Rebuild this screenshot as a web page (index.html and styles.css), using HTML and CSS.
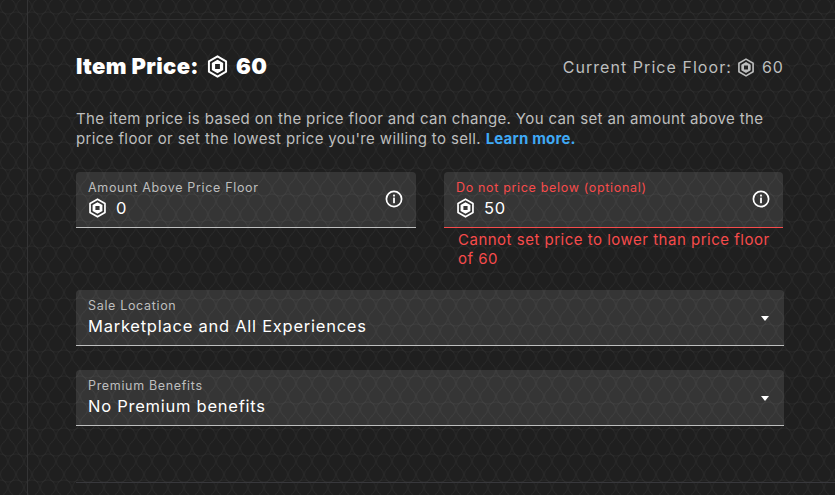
FILE: index.html
```html
<!DOCTYPE html>
<html lang="en">
<head>
<meta charset="utf-8">
<title>Item Price</title>
<link rel="stylesheet" href="styles.css">
</head>
<body>
<svg class="defs" width="0" height="0" aria-hidden="true">
  <symbol id="robux" viewBox="0 0 20 22">
    <path d="M10 1.3 18.2 6V16L10 20.7 1.8 16V6Z" fill="none" stroke="currentColor" stroke-width="1.9" stroke-linejoin="round"/>
    <path fill-rule="evenodd" d="M10 4.6 15.4 7.7V14.3L10 17.4 4.6 14.3V7.7ZM7.7 8.7V13.3H12.3V8.7Z" fill="currentColor"/>
  </symbol>
  <symbol id="info" viewBox="0 0 18 18">
    <circle cx="9" cy="9" r="7.6" fill="none" stroke="currentColor" stroke-width="1.7"/>
    <rect x="8.1" y="7.6" width="1.8" height="5.6" fill="currentColor"/>
    <rect x="8.1" y="4.6" width="1.8" height="1.9" fill="currentColor"/>
  </symbol>
</svg>
<main class="page">
  <section class="panel">
    <header class="head">
      <h2 class="title">Item Price:<svg class="rb-title"><use href="#robux"/></svg>60</h2>
      <p class="floor">Current Price Floor:<svg class="rb-floor"><use href="#robux"/></svg>60</p>
    </header>
    <p class="desc">The item price is based on the price floor and can change. You can set an amount above the price floor or set the lowest price you're willing to sell. <a class="more" href="#">Learn more.</a></p>
    <div class="pair">
      <div class="col">
        <div class="field">
          <div class="field-text">
            <span class="label">Amount Above Price Floor</span>
            <span class="value"><svg class="rb-input"><use href="#robux"/></svg>0</span>
          </div>
          <svg class="info"><use href="#info"/></svg>
        </div>
      </div>
      <div class="col">
        <div class="field field-error">
          <div class="field-text">
            <span class="label">Do not price below (optional)</span>
            <span class="value"><svg class="rb-input"><use href="#robux"/></svg>50</span>
          </div>
          <svg class="info"><use href="#info"/></svg>
        </div>
        <p class="error">Cannot set price to lower than price floor of 60</p>
      </div>
    </div>
    <div class="field select select-first">
      <div class="field-text">
        <span class="label">Sale Location</span>
        <span class="value">Marketplace and All Experiences</span>
      </div>
      <span class="caret"></span>
    </div>
    <div class="field select select-next">
      <div class="field-text">
        <span class="label">Premium Benefits</span>
        <span class="value">No Premium benefits</span>
      </div>
      <span class="caret"></span>
    </div>
  </section>
</main>
</body>
</html>
```

FILE: styles.css
```css
* { box-sizing: border-box; }
html, body { margin: 0; height: 100%; }
body {
  width: 835px;
  height: 495px;
  overflow: hidden;
  background-color: #1f1f1f;
  background-image: url("data:image/svg+xml,%3Csvg xmlns='http://www.w3.org/2000/svg' width='16' height='26'%3E%3Cg fill='none' stroke='%23ffffff' stroke-opacity='.04'%3E%3Ccircle cx='8' cy='6.5' r='7.5'/%3E%3Ccircle cx='0' cy='19.5' r='7.5'/%3E%3Ccircle cx='16' cy='19.5' r='7.5'/%3E%3C/g%3E%3C/svg%3E");
  font-family: Inter, "Liberation Sans", sans-serif;
  color: #fff;
}
.defs { position: absolute; }
.page {
  margin-left: 27px;
  height: 495px;
  padding: 19px 0 0 48px;
  border-left: 1px solid #333334;
}
.panel {
  width: 760px;
  height: 464px;
  padding: 0 52px 0 0;
  border-top: 1px solid #303031;
  border-bottom: 1px solid #38383c;
}
.head {
  display: flex;
  justify-content: space-between;
  align-items: center;
  height: 26px;
  margin-top: 33px;
}
.title {
  margin: 0;
  display: flex;
  align-items: center;
  font-size: 22px;
  font-weight: 900;
  line-height: 26px;
  letter-spacing: 0.35px;
}
.rb-title { width: 21px; height: 23px; margin: 0 8px; color: #fff; }
.floor {
  margin: 2px 0 0;
  display: flex;
  align-items: center;
  font-size: 16px;
  line-height: 20px;
  color: #bdbebe;
  letter-spacing: 1.05px;
}
.rb-floor { width: 18px; height: 19px; margin: 0 7px 0 5px; color: #bdbebe; }
.desc {
  margin: 30px 0 0;
  font-size: 15px;
  line-height: 20px;
  color: #bdbebe;
  letter-spacing: 0.37px;
}
.more { color: #3fa9f5; font-weight: 700; text-decoration: none; letter-spacing: 0.2px; }
.pair {
  display: flex;
  gap: 28px;
  margin-top: 23px;
}
.col { width: 340px; }
.col:last-child { width: 339px; }
.field {
  display: flex;
  justify-content: space-between;
  align-items: center;
  height: 56px;
  padding: 0 13px 0 12px;
  border-radius: 4px 4px 0 0;
  border-bottom: 1px solid #bdbebe;
  background: rgba(255, 255, 255, 0.1);
}
.field-text { display: flex; flex-direction: column; padding-bottom: 2px; }
.label {
  font-size: 12.5px;
  line-height: 15px;
  color: #bdbebe;
  letter-spacing: 0.67px;
}
.value {
  display: flex;
  align-items: center;
  margin-top: 3px;
  font-size: 16.5px;
  line-height: 20px;
  letter-spacing: 0.75px;
  color: #fff;
}
.rb-input { width: 19px; height: 20px; margin: 0 9px 0 0; color: #fff; }
.info { width: 18px; height: 18px; color: #fff; margin-top: -1px; }
.field-error { border-bottom-color: #f74b4b; }
.field-error .label { color: #f74b4b; }
.error {
  margin: 2px 0 0;
  padding-left: 14px;
  font-size: 15px;
  line-height: 19px;
  color: #f74b4b;
  letter-spacing: 0.5px;
}
.select { width: 708px; }
.select-first { margin-top: 22px; }
.select-next { margin-top: 24px; }
.caret {
  width: 0;
  height: 0;
  margin: 1px 2px 0 0;
  border-left: 4px solid transparent;
  border-right: 4px solid transparent;
  border-top: 5px solid #fff;
}
```
